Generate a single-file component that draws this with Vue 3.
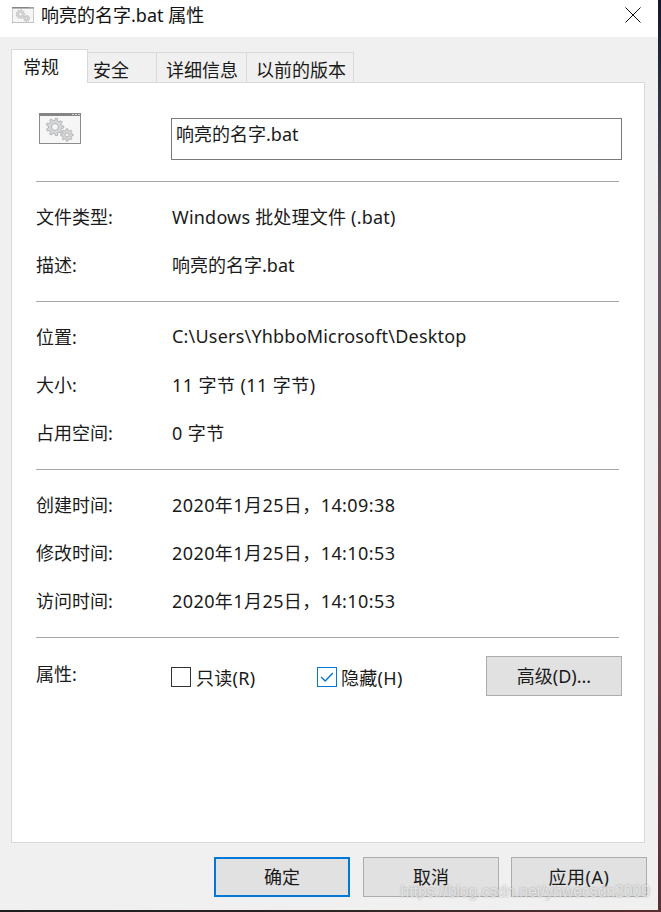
<template>
  <div class="desktop">
    <div class="window">
      <div class="titlebar">
        <svg class="title-icon" viewBox="0 0 42 31">
          <use href="#bat-icon" />
        </svg>
        <span class="title">响亮的名字.bat 属性</span>
        <svg class="close" viewBox="0 0 16 16">
          <path d="M0.5 0.5 L15.5 15.5 M15.5 0.5 L0.5 15.5" />
        </svg>
      </div>

      <div class="body">
        <ul class="tabs">
          <li
            v-for="(tab, index) in tabs"
            :key="index"
            class="tab"
            :class="{ active: index === 0 }"
            :style="{ width: tab.width + 'px', paddingLeft: tab.pad + 'px' }"
          >
            {{ tab.title }}
          </li>
        </ul>

        <div class="panel">
          <div class="head">
            <svg class="file-icon" viewBox="0 0 42 31">
              <symbol id="bat-icon" viewBox="0 0 42 31">
                <rect x="0.5" y="0.5" width="41" height="30" fill="#f6f6f6" stroke="#8c8c8c" />
                <rect x="0" y="0" width="42" height="3" fill="#858585" />
                <rect x="33" y="1" width="2" height="1" fill="#d8d8d8" />
                <rect x="36" y="1" width="2" height="1" fill="#d8d8d8" />
                <rect x="39" y="1" width="2" height="1" fill="#d8d8d8" />
                <path :d="bigGear" fill="#d4d6d8" stroke="#a8aaac" stroke-width="0.8" />
                <circle cx="16" cy="14" r="3.4" fill="#f6f6f6" stroke="#a8aaac" stroke-width="0.8" />
                <path :d="smallGear" fill="#d4d6d8" stroke="#a8aaac" stroke-width="0.8" />
                <circle cx="28" cy="22" r="2" fill="#f6f6f6" stroke="#a8aaac" stroke-width="0.8" />
              </symbol>
              <use href="#bat-icon" />
            </svg>
            <div class="name-input">响亮的名字.bat</div>
          </div>

          <div v-for="(section, i) in sections" :key="i" class="section">
            <div v-for="row in section" :key="row.label" class="row">
              <span class="label">{{ row.label }}</span>
              <span class="value" :class="row.track">{{ row.value }}</span>
            </div>
          </div>

          <div class="section attrs">
            <span class="label">属性:</span>
            <label class="check first">
              <span class="box"></span>
              只读(R)
            </label>
            <label class="check">
              <span class="box checked">
                <svg viewBox="0 0 20 20">
                  <path d="M3.5 10 L8 14.5 L16.5 5.5" />
                </svg>
              </span>
              隐藏(H)
            </label>
            <button class="btn advanced">高级(D)...</button>
          </div>
        </div>

        <div class="footer">
          <button class="btn primary">确定</button>
          <button class="btn">取消</button>
          <button class="btn apply">应用(A)</button>
        </div>
      </div>
    </div>
    <div class="watermark">https://blog.csdn.net/yhwecsdn2009</div>
  </div>
</template>

<script setup>
const tabs = [
  { title: "常规", width: 77, pad: 11 },
  { title: "安全", width: 69, pad: 5 },
  { title: "详细信息", width: 90, pad: 9 },
  { title: "以前的版本", width: 107, pad: 9 },
];

const sections = [
  [
    { label: "文件类型:", value: "Windows 批处理文件 (.bat)", track: "slight" },
    { label: "描述:", value: "响亮的名字.bat" },
  ],
  [
    { label: "位置:", value: "C:\\Users\\YhbboMicrosoft\\Desktop", track: "slight" },
    { label: "大小:", value: "11 字节 (11 字节)", track: "wide" },
    { label: "占用空间:", value: "0 字节", track: "wide" },
  ],
  [
    { label: "创建时间:", value: "2020年1月25日，14:09:38", track: "wide" },
    { label: "修改时间:", value: "2020年1月25日，14:10:53", track: "wide" },
    { label: "访问时间:", value: "2020年1月25日，14:10:53", track: "wide" },
  ],
];

// gear outline for the file icon
function gear(cx, cy, outer, inner, teeth) {
  const step = (Math.PI * 2) / teeth;
  const points = [];
  for (let i = 0; i < teeth; i++) {
    const a = i * step;
    const corners = [
      [inner, a - step * 0.32],
      [outer, a - step * 0.16],
      [outer, a + step * 0.16],
      [inner, a + step * 0.32],
    ];
    for (const [r, t] of corners) {
      points.push(`${(cx + r * Math.cos(t)).toFixed(2)} ${(cy + r * Math.sin(t)).toFixed(2)}`);
    }
  }
  return "M" + points.join(" L") + " Z";
}

const bigGear = gear(16, 14, 8.8, 6.6, 9);
const smallGear = gear(28, 22, 6.2, 4.6, 8);
</script>

<style>
html,
body {
  margin: 0;
  background: #1c1c20;
}
</style>

<style scoped>
ul,
li {
  list-style: none;
  padding: 0;
  margin: 0;
}

.desktop {
  position: relative;
  width: 661px;
  height: 912px;
  overflow: hidden;
  background:
    linear-gradient(90deg, #1e1e1e 0%, #2b2624 50%, #5a2f30 100%) bottom / 100% 2px no-repeat,
    linear-gradient(180deg, #101830 0%, #5e5460 25%, #7b4650 60%, #5a3034 100%);
  font-family: "Noto Sans", "Noto Sans CJK SC", sans-serif;
  font-size: 18px;
  color: #1a1a1a;
}

.window {
  width: 658px;
  height: 910px;
  display: flex;
  flex-direction: column;
  background: #f0f0f0;
}

.titlebar {
  height: 37px;
  flex: none;
  display: flex;
  align-items: center;
  padding: 0 17px 0 12px;
  background: #fff;
}

.title-icon {
  width: 22px;
  height: 16px;
  margin: -7px 7px 0 0;
}

.title {
  flex: 1;
  line-height: 30px;
  margin-top: -7px;
  color: #111;
}

.close {
  width: 16px;
  height: 16px;
  margin-top: -7px;
}

.close path {
  fill: none;
  stroke: #111;
  stroke-width: 1;
}

.body {
  flex: 1;
  display: flex;
  flex-direction: column;
  padding: 12px 13px 0 11px;
  min-height: 0;
}

.tabs {
  display: flex;
  height: 33px;
  flex: none;
  align-items: flex-end;
  position: relative;
  z-index: 1;
}

.tab {
  box-sizing: border-box;
  height: 30px;
  border: 1px solid #d9d9d9;
  border-left: 0;
  border-bottom: 0;
  line-height: 35px;
  white-space: nowrap;
}

.tab.active {
  height: 34px;
  margin-bottom: -1px;
  background: #fff;
  border-left: 1px solid #d9d9d9;
  line-height: 35px;
}

.panel {
  box-sizing: border-box;
  height: 761px;
  flex: none;
  padding: 0 25px 0 24px;
  background: #fff;
  border: 1px solid #d9d9d9;
}

.head {
  height: 98px;
  display: flex;
  align-items: flex-start;
}

.file-icon {
  width: 42px;
  height: 31px;
  margin: 30px 0 0 3px;
}

.name-input {
  box-sizing: border-box;
  flex: none;
  width: 451px;
  height: 42px;
  margin: 35px -3px 0 90px;
  padding: 2px 4px;
  line-height: 26px;
  border: 1px solid #7a7a7a;
}

.section {
  border-top: 1px solid #a8a8a8;
  padding: 11px 0 12px;
}

.row {
  display: flex;
  height: 48px;
  align-items: center;
}

.label {
  width: 136px;
  flex: none;
  margin-top: -2px;
}

.value {
  white-space: nowrap;
  margin-top: -2px;
}

.slight {
  letter-spacing: 0.2px;
}

.wide {
  letter-spacing: 0.42px;
}

.attrs {
  display: flex;
  align-items: flex-start;
  padding: 18px 0 0;
}

.attrs .label {
  line-height: 36px;
  margin-top: 0;
}

.check {
  display: flex;
  align-items: center;
  gap: 4px;
  height: 40px;
  margin-top: 1px;
  width: 146px;
  white-space: nowrap;
  letter-spacing: 0.3px;
}

.check.first {
  margin-left: -1px;
  gap: 5px;
}

.box {
  box-sizing: border-box;
  width: 20px;
  height: 20px;
  flex: none;
  border: 1px solid #333;
  background: #fff;
}

.box.checked {
  border-color: #0078d7;
}

.box svg {
  display: block;
  width: 18px;
  height: 18px;
}

.box path {
  fill: none;
  stroke: #0078d7;
  stroke-width: 1.6;
}

.btn {
  box-sizing: border-box;
  width: 136px;
  height: 40px;
  padding: 0;
  background: #e1e1e1;
  border: 1px solid #adadad;
  font: inherit;
  line-height: 18px;
  color: #1a1a1a;
}

.advanced {
  margin-left: 23px;
  margin-right: -3px;
  flex: none;
}

.footer {
  display: flex;
  justify-content: flex-end;
  gap: 12px;
  margin: 14px -2px 0 0;
}

.btn.primary {
  border: 2px solid #0078d7;
  margin-right: 1px;
}

.btn.apply {
  letter-spacing: 0.5px;
}

.watermark {
  position: absolute;
  right: 11px;
  bottom: 13px;
  font-family: "Liberation Sans", sans-serif;
  font-size: 15.7px;
  line-height: 14px;
  white-space: nowrap;
  color: rgba(255, 255, 255, 0.6);
  text-shadow: 0 0 2px rgba(110, 110, 110, 0.6);
}
</style>
